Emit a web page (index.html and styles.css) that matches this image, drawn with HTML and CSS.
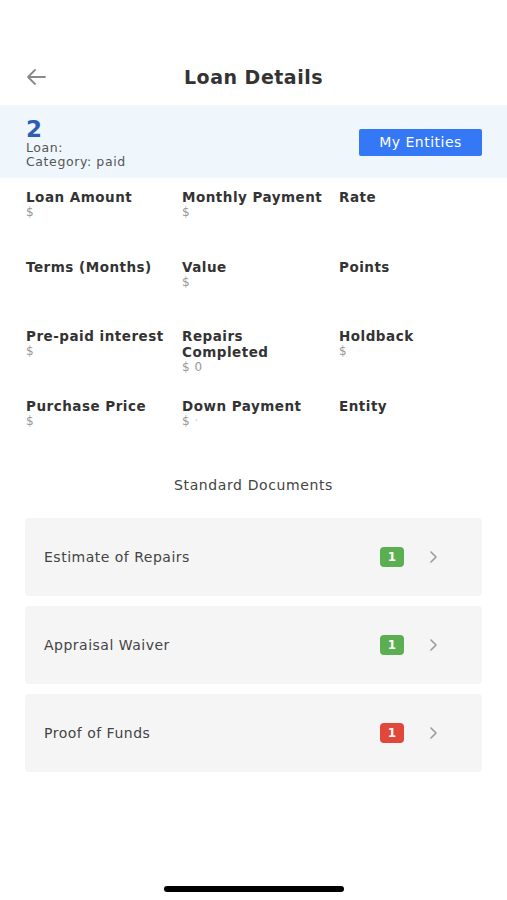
FILE: index.html
```html
<!DOCTYPE html>
<html>
<head>
<meta charset="utf-8">
<link rel="stylesheet" href="styles.css">
</head>
<body>
<div class="screen">
  <header class="nav">
    <span class="back">
      <svg width="20" height="16" viewBox="0 0 20 16"><path d="M19 8H2M9 1L2 8l7 7" fill="none" stroke="#8a8a8a" stroke-width="1.8" stroke-linecap="round" stroke-linejoin="round"/></svg>
    </span>
    <h1 class="title">Loan Details</h1>
  </header>

  <section class="band">
    <div class="band-info">
      <div class="loan-num">2</div>
      <div class="band-line">Loan:</div>
      <div class="band-line">Category: paid</div>
    </div>
    <button class="btn">My Entities</button>
  </section>

  <section class="grid">
    <div class="cell"><div class="label">Loan Amount</div><div class="value">$</div></div>
    <div class="cell"><div class="label">Monthly Payment</div><div class="value">$</div></div>
    <div class="cell"><div class="label">Rate</div></div>
    <div class="cell"><div class="label">Terms (Months)</div></div>
    <div class="cell"><div class="label">Value</div><div class="value">$</div></div>
    <div class="cell"><div class="label">Points</div></div>
    <div class="cell"><div class="label">Pre-paid interest</div><div class="value">$</div></div>
    <div class="cell"><div class="label">Repairs<br>Completed</div><div class="value">$ 0</div></div>
    <div class="cell"><div class="label">Holdback</div><div class="value">$</div></div>
    <div class="cell"><div class="label">Purchase Price</div><div class="value">$</div></div>
    <div class="cell"><div class="label">Down Payment</div><div class="value">$ <span class="dot">·</span></div></div>
    <div class="cell"><div class="label">Entity</div></div>
  </section>

  <h2 class="section-title">Standard Documents</h2>

  <section class="docs">
    <div class="doc">
      <span class="doc-name">Estimate of Repairs</span>
      <span class="badge green">1</span>
      <svg class="chev" width="9" height="14" viewBox="0 0 9 14"><path d="M2 2l5 5-5 5" fill="none" stroke="#9a9a9a" stroke-width="1.6" stroke-linecap="round" stroke-linejoin="round"/></svg>
    </div>
    <div class="doc">
      <span class="doc-name">Appraisal Waiver</span>
      <span class="badge green">1</span>
      <svg class="chev" width="9" height="14" viewBox="0 0 9 14"><path d="M2 2l5 5-5 5" fill="none" stroke="#9a9a9a" stroke-width="1.6" stroke-linecap="round" stroke-linejoin="round"/></svg>
    </div>
    <div class="doc">
      <span class="doc-name">Proof of Funds</span>
      <span class="badge red">1</span>
      <svg class="chev" width="9" height="14" viewBox="0 0 9 14"><path d="M2 2l5 5-5 5" fill="none" stroke="#9a9a9a" stroke-width="1.6" stroke-linecap="round" stroke-linejoin="round"/></svg>
    </div>
  </section>

  <div class="home-indicator"></div>
</div>
</body>
</html>
```

FILE: styles.css
```css
* { box-sizing: border-box; }
html, body { margin: 0; padding: 0; background: #fff; }
body {
  font-family: "DejaVu Sans", "Liberation Sans", sans-serif;
  color: #333;
}
.screen {
  position: relative;
  width: 507px;
  height: 900px;
  overflow: hidden;
}
.nav {
  position: relative;
  height: 105px;
  padding-top: 50px;
  display: flex;
  align-items: center;
  justify-content: center;
}
.back {
  position: absolute;
  left: 26px;
  top: 69px;
  display: flex;
}
.title {
  margin: 0;
  font-size: 19px;
  letter-spacing: 0.5px;
  font-weight: bold;
  color: #333;
  height: 55px;
  line-height: 55px;
}
.band {
  height: 73px;
  background: #eff7fd;
  display: flex;
  align-items: center;
  justify-content: space-between;
  padding: 0 25px 0 26px;
}
.band-info { display: flex; flex-direction: column; padding-top: 2px; }
.loan-num {
  font-size: 23px;
  font-weight: bold;
  color: #2b5fb5;
  line-height: 24px;
}
.band-line {
  font-size: 12.5px;
  letter-spacing: 0.6px;
  line-height: 14px;
  color: #555;
}
.btn {
  width: 123px;
  height: 27px;
  border: none;
  border-radius: 2px;
  background: #3478f6;
  color: #fff;
  font-family: inherit;
  font-size: 14px;
  letter-spacing: 0.5px;
  padding: 0;
  margin-top: 1px;
}
.grid {
  display: grid;
  grid-template-columns: 156px 157px 1fr;
  grid-auto-rows: 69.5px;
  padding: 11px 0 0 26px;
}
.label {
  font-size: 13.5px;
  letter-spacing: 0.5px;
  font-weight: bold;
  line-height: 16px;
  color: #333;
}
.value {
  font-size: 12px;
  letter-spacing: 0.5px;
  line-height: 14px;
  color: #999;
}
.dot { color: #ccc; }
.section-title {
  margin: 9px 0 0;
  text-align: center;
  font-size: 14px;
  letter-spacing: 0.6px;
  font-weight: normal;
  line-height: 18px;
  color: #444;
}
.docs {
  display: flex;
  flex-direction: column;
  gap: 10px;
  margin: 24px 25px 0;
}
.doc {
  height: 78px;
  background: #f5f5f5;
  border-radius: 4px;
  display: flex;
  align-items: center;
  padding: 0 44px 0 19px;
}
.doc-name {
  flex: 1;
  font-size: 14px;
  letter-spacing: 0.5px;
  color: #444;
}
.badge {
  width: 24px;
  height: 20px;
  border-radius: 4px;
  color: #fff;
  font-size: 12px;
  font-weight: bold;
  display: flex;
  align-items: center;
  justify-content: center;
  margin-right: 25px;
}
.green { background: #5cae52; }
.red { background: #e2473b; }
.chev { display: block; }
.home-indicator {
  position: absolute;
  left: 164px;
  bottom: 8px;
  width: 180px;
  height: 6px;
  border-radius: 3px;
  background: #000;
}
```
